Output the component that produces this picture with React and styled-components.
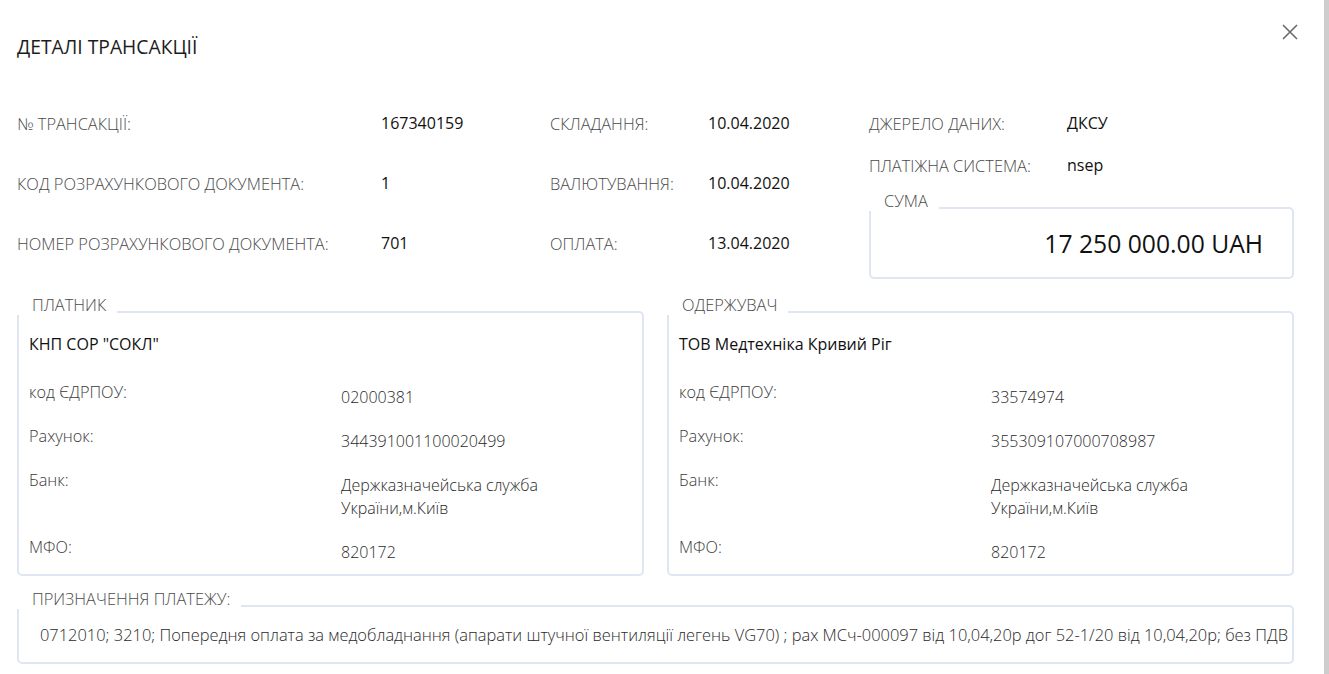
import React from 'react';
import styled, { createGlobalStyle } from 'styled-components';

const GlobalStyle = createGlobalStyle`
	html, body {
		margin: 0;
		padding: 0;
		background: #fff;
	}
	body {
		font-family: 'Open Sans', 'Noto Sans', sans-serif;
		color: #222;
	}
`;

let summary = [
	[
		{ label: '№ ТРАНСАКЦІЇ:', value: '167340159' },
		{ label: 'КОД РОЗРАХУНКОВОГО ДОКУМЕНТА:', value: '1' },
		{ label: 'НОМЕР РОЗРАХУНКОВОГО ДОКУМЕНТА:', value: '701' },
	],
	[
		{ label: 'СКЛАДАННЯ:', value: '10.04.2020' },
		{ label: 'ВАЛЮТУВАННЯ:', value: '10.04.2020' },
		{ label: 'ОПЛАТА:', value: '13.04.2020' },
	],
];

let source = [
	{ label: 'ДЖЕРЕЛО ДАНИХ:', value: 'ДКСУ' },
	{ label: 'ПЛАТІЖНА СИСТЕМА:', value: 'nsep' },
];

let parties = [
	{
		title: 'ПЛАТНИК',
		name: 'КНП СОР "СОКЛ"',
		code: '02000381',
		account: '344391001100020499',
		mfo: '820172',
	},
	{
		title: 'ОДЕРЖУВАЧ',
		name: 'ТОВ Медтехніка Кривий Ріг',
		code: '33574974',
		account: '355309107000708987',
		mfo: '820172',
	},
];

const FieldBox = ({ title, children, className }) => (
	<div className={className}>
		<Legend>{title}</Legend>
		<Box>{children}</Box>
	</div>
);

const App = () => {
	return (
		<Page>
			<GlobalStyle />
			<Main>
				<Header>
					<Title>ДЕТАЛІ ТРАНСАКЦІЇ</Title>
					<Close aria-label="close">
						<svg width="18" height="18" viewBox="0 0 18 18">
							<path d="M2 2 L16 16 M16 2 L2 16" stroke="#6b6b6b" strokeWidth="1.6" fill="none" />
						</svg>
					</Close>
				</Header>

				<Content>
					<Summary>
						<InfoGrid $label="364px">
							{summary[0].map((item) => (
								<React.Fragment key={item.label}>
									<Label>{item.label}</Label>
									<Value>{item.value}</Value>
								</React.Fragment>
							))}
						</InfoGrid>
						<InfoGrid $label="158px">
							{summary[1].map((item) => (
								<React.Fragment key={item.label}>
									<Label>{item.label}</Label>
									<Value>{item.value}</Value>
								</React.Fragment>
							))}
						</InfoGrid>
						<RightCol>
							<SourceGrid>
								{source.map((item) => (
									<React.Fragment key={item.label}>
										<Label>{item.label}</Label>
										<Value>{item.value}</Value>
									</React.Fragment>
								))}
							</SourceGrid>
							<SumBox title="СУМА">
								<Amount>17 250 000.00 UAH</Amount>
							</SumBox>
						</RightCol>
					</Summary>

					<Parties>
						{parties.map((p) => (
							<FieldBox key={p.title} title={p.title}>
								<PartyBody>
									<PartyName>{p.name}</PartyName>
									<PartyRows>
										<PartyLabel>код ЄДРПОУ:</PartyLabel>
										<PartyValue>{p.code}</PartyValue>
										<PartyLabel>Рахунок:</PartyLabel>
										<PartyValue>{p.account}</PartyValue>
										<PartyLabel>Банк:</PartyLabel>
										<PartyValue>
											Держказначейська служба
											<br />
											України,м.Київ
										</PartyValue>
										<PartyLabel>МФО:</PartyLabel>
										<PartyValue>{p.mfo}</PartyValue>
									</PartyRows>
								</PartyBody>
							</FieldBox>
						))}
					</Parties>

					<PurposeBox title="ПРИЗНАЧЕННЯ ПЛАТЕЖУ:">
						<Purpose>
							0712010; 3210; Попередня оплата за медобладнання (апарати штучної вентиляції легень VG70) ; рах МСч-000097 від 10,04,20р дог 52-1/20 від 10,04,20р; без ПДВ
						</Purpose>
					</PurposeBox>
				</Content>
			</Main>
			<Scrollbar />
		</Page>
	);
};

const Page = styled.div`
	display: flex;
	width: 100%;
	height: 674px;
	overflow: hidden;
`;

const Main = styled.div`
	flex: 1;
	min-width: 0;
`;

const Scrollbar = styled.div`
	width: 5px;
	background: #cdcdcd;
`;

const Header = styled.div`
	display: flex;
	justify-content: space-between;
	align-items: flex-start;
	padding: 21px 25px 0 17px;
	height: 72px;
`;

const Title = styled.h1`
	margin: 14px 0 0;
	font-size: 19.3px;
	font-weight: 400;
	line-height: 24px;
	color: #1c1c1c;
`;

const Close = styled.button`
	all: unset;
	display: flex;
	cursor: pointer;
	margin-top: 2px;
`;

const Content = styled.div`
	padding: 0 30px 0 17px;
`;

const Summary = styled.div`
	display: grid;
	grid-template-columns: 533px 319px 1fr;
	height: 186px;
	margin-bottom: 16px;
`;

const InfoGrid = styled.div`
	display: grid;
	grid-template-columns: ${(p) => p.$label} 1fr;
	grid-auto-rows: 60px;
	align-items: center;
`;

const Label = styled.div`
	font-size: 16.4px;
	font-weight: 300;
	color: #4a4a4a;
	white-space: nowrap;
`;

const Value = styled.div`
	font-size: 16px;
	font-weight: 400;
	color: #111;
	white-space: nowrap;
`;

const RightCol = styled.div`
	display: flex;
	flex-direction: column;
	padding-top: 9px;
`;

const SourceGrid = styled.div`
	display: grid;
	grid-template-columns: 198px 1fr;
	grid-auto-rows: 42px;
	align-items: center;
`;

const Legend = styled.div`
	width: fit-content;
	position: relative;
	z-index: 1;
	background: #fff;
	padding: 0 11px 0 15px;
	margin-bottom: -4px;
	font-size: 16.4px;
	font-weight: 300;
	line-height: 20px;
	color: #4a4a4a;
	white-space: nowrap;
`;

const Box = styled.div`
	border: 2px solid #dfe5f3;
	border-radius: 5px;
`;

const SumBox = styled(FieldBox)`
	margin-top: 5px;

	${Box} {
		height: 68px;
		display: flex;
		align-items: center;
		justify-content: flex-end;
		padding-right: 29px;
	}
`;

const Amount = styled.div`
	font-size: 24.7px;
	color: #111;
	white-space: nowrap;
`;

const Parties = styled.div`
	display: grid;
	grid-template-columns: 1fr 1fr;
	gap: 23px;
`;

const PartyBody = styled.div`
	padding: 20px 9px 10px 10px;
`;

const PartyName = styled.div`
	font-size: 16px;
	font-weight: 500;
	line-height: 22px;
	color: #111;
	margin-bottom: 26px;
`;

const PartyRows = styled.div`
	display: grid;
	grid-template-columns: 312px 1fr;
	row-gap: 16px;
	align-items: start;
`;

const PartyLabel = styled.div`
	font-size: 16.3px;
	font-weight: 300;
	line-height: 22px;
	color: #3a3a3a;
`;

const PartyValue = styled.div`
	padding-top: 5px;
	font-size: 16px;
	font-weight: 300;
	line-height: 23px;
	color: #2a2a2a;
`;

const PurposeBox = styled(FieldBox)`
	margin-top: 13px;

	${Box} {
		height: 55px;
		display: flex;
		align-items: center;
		padding-left: 21px;
		overflow: hidden;
	}
`;

const Purpose = styled.div`
	font-size: 16.43px;
	font-weight: 300;
	color: #2a2a2a;
	white-space: nowrap;
`;

export default App;
